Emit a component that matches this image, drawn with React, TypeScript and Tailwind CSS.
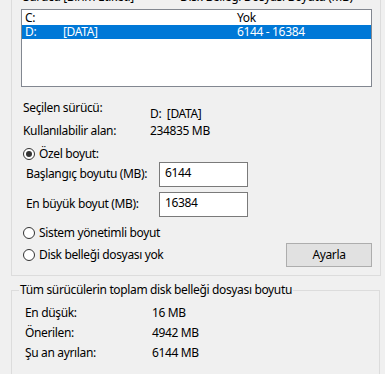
import { ReactNode } from "react";

function Radio({ checked, label }: { checked?: boolean; label: string }) {
  return (
    <div className="flex h-[14px] items-center">
      <span className="flex h-[12px] w-[12px] items-center justify-center rounded-full border border-[#333333] bg-white">
        {checked && <span className="h-[6px] w-[6px] rounded-full bg-[#333333]" />}
      </span>
      <span className="ml-[4px] leading-[14px]">{label}</span>
    </div>
  );
}

function SizeField({ label, value }: { label: string; value: string }) {
  return (
    <div className="flex items-start pl-[5px]">
      <span className="w-[133px] pt-[5px] leading-[14px]">{label}</span>
      <div className="h-[25px] w-[89px] border border-[#7a7a7a] bg-white px-[5px] pt-[3px] leading-[14px]">{value}</div>
    </div>
  );
}

function InfoRow({ label, children, className = "" }: { label: string; children: ReactNode; className?: string }) {
  return (
    <div className={`flex leading-[14px] ${className}`}>
      <span className="w-[127px]">{label}</span>
      <span>{children}</span>
    </div>
  );
}

export default function App() {
  return (
    <div
      className="h-[374px] w-[385px] overflow-hidden bg-[#f0f0f0] text-[12px] tracking-[-0.35px] text-black"
      style={{ fontFamily: '"Noto Sans", "Open Sans", sans-serif' }}
    >
      {/* Upper group: drive list and custom size */}
      <div className="ml-[11px] h-[276px] w-[370px] border-x border-b border-[#dcdcdc] pl-[9px] pr-[8px]">
        <div className="h-[9px] overflow-hidden">
          <div className="-mt-[10px] flex leading-[14px]">
            <span className="w-[159px] pl-[2px]">Sürücü [Birim Etiketi]</span>
            <span>Disk Belleği Dosyası Boyutu (MB)</span>
          </div>
        </div>

        <div className="h-[78px] border border-[#828790] bg-white">
          <div className="flex h-[15px] items-center pl-[3px] leading-[14px]">
            <span className="w-[38px]">C:</span>
            <span className="w-[174px]" />
            <span>Yok</span>
          </div>
          <div className="flex h-[14px] items-center bg-[#0078d7] pl-[3px] leading-[14px] text-white">
            <span className="w-[38px]">D:</span>
            <span className="w-[174px]">[DATA]</span>
            <span>6144 - 16384</span>
          </div>
        </div>

        <div className="mt-[14px] pl-[2px]">
          <InfoRow label="Seçilen sürücü:" className="h-[23px]">
            <span className="mt-[6px] block">D:&nbsp; [DATA]</span>
          </InfoRow>
          <InfoRow label="Kullanılabilir alan:">234835 MB</InfoRow>

          <div className="mt-[9px]">
            <Radio checked label="Özel boyut:" />
          </div>
        </div>

        <div className="mt-[1px] flex flex-col gap-[5px]">
          <SizeField label="Başlangıç boyutu (MB):" value="6144" />
          <SizeField label="En büyük boyut (MB):" value="16384" />
        </div>

        <div className="mt-[9px] pl-[2px]">
          <Radio label="Sistem yönetimli boyut" />
          <div className="mt-[3px] flex items-center justify-between">
            <Radio label="Disk belleği dosyası yok" />
            <button className="h-[24px] w-[86px] border border-[#adadad] bg-[#e1e1e1] leading-[14px]">Ayarla</button>
          </div>
        </div>
      </div>

      {/* Lower group: totals for all drives */}
      <div className="relative ml-[11px] mt-[14px] h-[120px] w-[369px] border border-[#dcdcdc] pl-[13px] pt-[15px]">
        <span className="absolute -top-[8px] left-[7px] bg-[#f0f0f0] px-[1px] leading-[14px]">
          Tüm sürücülerin toplam disk belleği dosyası boyutu
        </span>
        <div className="flex flex-col gap-[6px]">
          <InfoRow label="En düşük:">16 MB</InfoRow>
          <InfoRow label="Önerilen:">4942 MB</InfoRow>
          <InfoRow label="Şu an ayrılan:">6144 MB</InfoRow>
        </div>
      </div>
    </div>
  );
}
